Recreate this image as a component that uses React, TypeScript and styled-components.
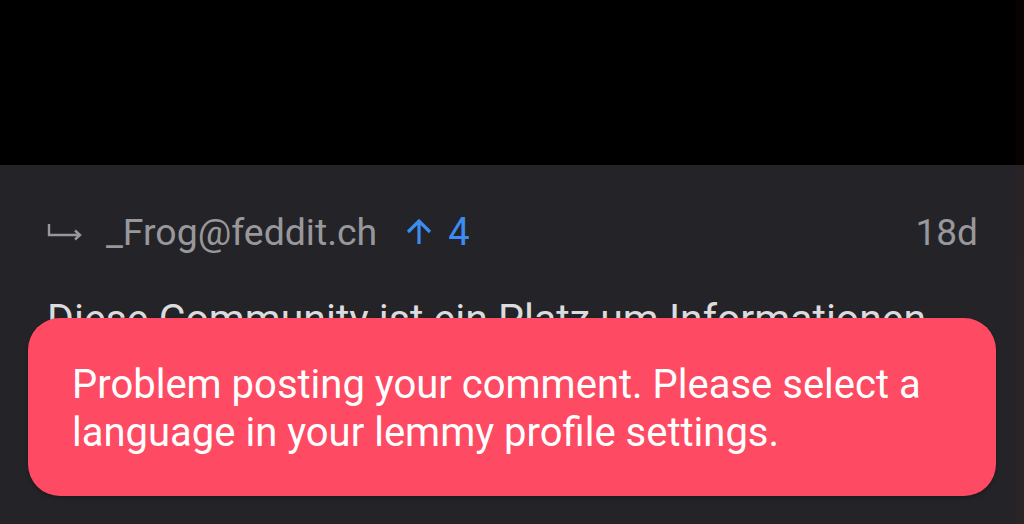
import React from "react";
import styled, { createGlobalStyle } from "styled-components";

const Global = createGlobalStyle`
  html, body { margin: 0; padding: 0; background: #242428; }
  body { font-family: Roboto, "Liberation Sans", sans-serif; }
  #root { width: 1024px; height: 524px; overflow: hidden; }
`;

const Page = styled.div`
  position: relative;
  width: 1024px;
  height: 524px;
  display: flex;
  flex-direction: column;
  background: #242428;
  overflow: hidden;
`;

const TopArea = styled.div`
  height: 165px;
  background: #000;
  flex-shrink: 0;
`;

const Comment = styled.div`
  display: flex;
  flex-direction: column;
  padding: 0 46px 0 47px;
`;

const Header = styled.div`
  height: 134px;
  display: flex;
  align-items: center;
`;

const ReplyIcon = styled.svg`
  width: 36px;
  height: 20px;
  margin-right: 23px;
  flex-shrink: 0;
`;

const Author = styled.span`
  font-size: 37.4px;
  color: #98989c;
`;

const Score = styled.span`
  display: flex;
  align-items: center;
  margin-left: 28px;
  color: #3c8cf2;
  font-size: 38px;
  gap: 15px;
`;

const Spacer = styled.div`
  flex: 1;
`;

const Age = styled.span`
  font-size: 37px;
  color: #98989c;
`;

const Body = styled.p`
  margin: -4px 0 0;
  font-size: 41px;
  line-height: 48px;
  color: #dcdcde;
  white-space: nowrap;
`;

const EdgeStrip = styled.div`
  position: absolute;
  top: 0;
  right: 0;
  width: 8px;
  height: 100%;
  background: rgba(120, 30, 30, 0.08);
`;

const Toast = styled.div`
  position: absolute;
  left: 28px;
  right: 28px;
  bottom: 28px;
  height: 178px;
  box-sizing: border-box;
  border-radius: 32px;
  background: #ff4a63;
  display: flex;
  align-items: center;
  padding: 4px 44px 0;
  box-shadow: 0 2px 4px rgba(0, 0, 0, 0.25);
`;

const ToastText = styled.p`
  margin: 0;
  color: #fff;
  font-size: 40px;
  line-height: 48px;
  white-space: nowrap;
`;

export default function App() {
  return (
    <>
      <Global />
      <Page>
        <TopArea />
        <Comment>
          <Header>
            <ReplyIcon viewBox="0 0 36 20">
              <path
                d="M2 2 V13 H33 M28 8.5 L33 13 L28 17.5"
                fill="none"
                stroke="#98989c"
                strokeWidth="2.4"
              />
            </ReplyIcon>
            <Author>_Frog@feddit.ch</Author>
            <Score>
              <svg width="28" height="28" viewBox="0 0 28 28">
                <path
                  d="M14 26 V3 M3 14 L14 3 L25 14"
                  fill="none"
                  stroke="#3c8cf2"
                  strokeWidth="3.2"
                />
              </svg>
              4
            </Score>
            <Spacer />
            <Age>18d</Age>
          </Header>
          <Body>Diese Community ist ein Platz um Informationen</Body>
        </Comment>
        <EdgeStrip />
        <Toast>
          <ToastText>
            Problem posting your comment. Please select a<br />
            language in your lemmy profile settings.
          </ToastText>
        </Toast>
      </Page>
    </>
  );
}
